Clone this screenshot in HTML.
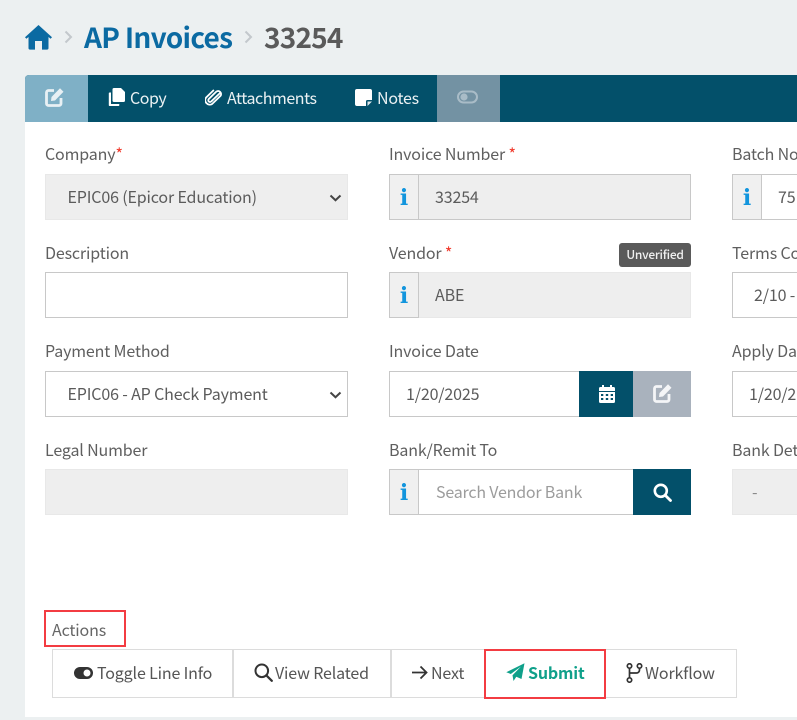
<!DOCTYPE html>
<html lang="en">
<head>
<meta charset="utf-8">
<title>AP Invoices 33254</title>
<style>
html,body{margin:0;padding:0}
body{width:797px;height:720px;overflow:hidden;position:relative;background:#ecf0f1;font-family:"Noto Sans CJK JP","Liberation Sans",sans-serif;color:#5b5b5b;font-size:16px;letter-spacing:-.15px}
.a{position:absolute;white-space:nowrap}
svg{display:block}
.card{position:absolute;left:25px;top:122px;width:772px;height:595px;background:#fff}
.bar{position:absolute;left:25px;top:75px;width:772px;height:47px;background:#03506a;border-radius:4px 0 0 0;overflow:hidden}
.tb{color:#fff;font-size:16px;letter-spacing:-.45px;line-height:47px;top:74px;opacity:.92}
.lb{font-size:16px;line-height:20px;color:#5f5f5f}
.req{color:#f0392b}
.box{position:absolute;box-sizing:border-box;height:46px;border:1px solid #c8c8c8;background:#fff;line-height:42px;font-size:16px;color:#5b5b5b;overflow:hidden;white-space:nowrap}
.dis{background:#eee;border-color:#e8e8e8}
.info{position:absolute;box-sizing:border-box;width:30px;height:46px;background:#f0f0f0;border:1px solid #c8c8c8;color:#1295dd;font:bold 22px/47px "DejaVu Serif","Liberation Serif",serif;letter-spacing:0;text-align:center}
.btn{position:absolute;box-sizing:border-box;top:649px;height:49px;border:1px solid #dcdcdc;background:#fff}
.bt{font-size:16px;line-height:20px;color:#555;top:662px}
</style>
</head>
<body>
<svg class="a" style="left:25px;top:25px" width="27" height="25" viewBox="0 0 27 25"><path d="M13.500 0 27 12.200 25.600 13.800 23.500 12V23a1.600 1.600 0 0 1-1.600 1.600H17V16H10v8.600H5.100A1.600 1.600 0 0 1 3.500 23V12L1.400 13.800 0 12.200Z" fill="#0b6aa2"/></svg>
<svg class="a" style="left:64px;top:30px" width="9" height="14" viewBox="0 0 9 14"><path d="M1.500 1.500 7 7 1.500 12.500" fill="none" stroke="#c3c8cc" stroke-width="2"/></svg>
<div class="a" style="left:84px;top:18px;font-size:28px;letter-spacing:-.72px;line-height:38px;font-weight:700;color:#0b6aa2">AP Invoices</div>
<svg class="a" style="left:244px;top:30px" width="9" height="14" viewBox="0 0 9 14"><path d="M1.500 1.500 7 7 1.500 12.500" fill="none" stroke="#c3c8cc" stroke-width="2"/></svg>
<div class="a" style="left:264px;top:18px;font-size:28px;letter-spacing:-.8px;line-height:38px;font-weight:700;color:#5a5a5a">33254</div>

<div class="card"></div>
<div class="bar">
  <div class="a" style="left:0;top:0;width:63px;height:47px;background:#7fb0c6"></div>
  <div class="a" style="left:412px;top:0;width:63px;height:47px;background:#7392a3"></div>
</div>
<svg class="a" style="left:44px;top:87px" width="21" height="21" viewBox="0 0 21 21"><path d="M10 3.500H4.500a2 2 0 0 0-2 2V16.500a2 2 0 0 0 2 2H15a2 2 0 0 0 2-2V11" fill="none" stroke="#e8f0f4" stroke-width="2.800"/><path d="M7.500 10 16 1.300 19.500 4.800 11 13.500 7 14Z" fill="#e8f0f4"/></svg>
<svg class="a" style="left:108px;top:88px" width="17" height="19" viewBox="0 0 17 19"><path d="M6 0H13L17 4V12.500a1.500 1.500 0 0 1-1.500 1.500H6a1.500 1.500 0 0 1-1.500-1.500V1.500A1.500 1.500 0 0 1 6 0Z" fill="#fff"/><path d="M3 4.500H1.500A.8.8 0 0 0 .8 5.300V17.200a.8.8 0 0 0 .7.800H10.500a.8.8 0 0 0 .8-.8V16H3Z" fill="#fff"/></svg>
<div class="a tb" style="left:130px">Copy</div>
<svg class="a" style="left:205px;top:88px" width="17" height="19" viewBox="0 0 17 19"><path d="M15 4.500 6.500 13.500a1.700 1.700 0 0 1-2.600-2.300L11 3.500a3 3 0 0 1 4.400 4L7.500 16A4.500 4.500 0 0 1 1.200 9.800L8 2.500" fill="none" stroke="#fff" stroke-width="1.800" stroke-linecap="round" transform="rotate(3 8 9)"/></svg>
<div class="a tb" style="left:227px">Attachments</div>
<svg class="a" style="left:355px;top:89px" width="17" height="17" viewBox="0 0 17 17"><path d="M2 0H15a2 2 0 0 1 2 2V11H12.500A1.500 1.500 0 0 0 11 12.500V17H2a2 2 0 0 1-2-2V2A2 2 0 0 1 2 0Z" fill="#fff"/><path d="M12.500 17V12.500H17Z" fill="#dfe8ec"/></svg>
<div class="a tb" style="left:377px;letter-spacing:-.25px">Notes</div>
<svg class="a" style="left:457px;top:90px" width="21" height="14" viewBox="0 0 21 14"><rect x="1" y="1.500" width="19" height="11" rx="5.500" fill="none" stroke="#a9bcc7" stroke-width="2"/><circle cx="7" cy="7" r="3.600" fill="#a9bcc7"/></svg>

<div class="a lb" style="left:45px;top:143px">Company<span class="req">*</span></div>
<div class="box dis" style="left:45px;top:174px;width:303px;padding-left:21.500px">EPIC06 (Epicor Education)</div>
<svg class="a" style="left:329px;top:194px" width="13" height="8" viewBox="0 0 13 8"><path d="M1.500 1.500 6.500 6.200 11.500 1.500" fill="none" stroke="#444" stroke-width="2"/></svg>

<div class="a lb" style="left:389px;top:143px">Invoice Number <span class="req">*</span></div>
<div class="box dis" style="left:389px;top:174px;width:302px;padding-left:45px;border-color:#c8c8c8">33254</div>
<div class="info" style="left:389px;top:174px">i</div>

<div class="a lb" style="left:732px;top:143px">Batch No</div>
<div class="box" style="left:732px;top:174px;width:90px;padding-left:45px">75</div>
<div class="info" style="left:732px;top:174px">i</div>

<div class="a lb" style="left:45px;top:242px">Description</div>
<div class="box" style="left:45px;top:272px;width:303px"></div>

<div class="a lb" style="left:389px;top:242px">Vendor <span class="req">*</span></div>
<div class="a" style="left:619px;top:243px;width:72px;height:24px;background:#5a5a5a;border-radius:3px;color:#f0f0f0;font-size:12px;letter-spacing:-.25px;font-weight:500;line-height:23px;text-align:center">Unverified</div>
<div class="box dis" style="left:389px;top:272px;width:302px;padding-left:45px">ABE</div>
<div class="info" style="left:389px;top:272px">i</div>

<div class="a lb" style="left:732px;top:242px">Terms Co</div>
<div class="box" style="left:732px;top:272px;width:90px;padding-left:21px">2/10 -</div>

<div class="a lb" style="left:45px;top:340px">Payment Method</div>
<div class="box" style="left:45px;top:371px;width:303px;padding-left:21.500px">EPIC06 - AP Check Payment</div>
<svg class="a" style="left:329px;top:391px" width="13" height="8" viewBox="0 0 13 8"><path d="M1.500 1.500 6.500 6.200 11.500 1.500" fill="none" stroke="#444" stroke-width="2"/></svg>

<div class="a lb" style="left:389px;top:340px">Invoice Date</div>
<div class="box" style="left:389px;top:371px;width:302px;padding-left:16px">1/20/2025</div>
<div class="a" style="left:579px;top:371px;width:54px;height:46px;background:#03506a"></div>
<div class="a" style="left:633px;top:371px;width:58px;height:46px;background:#a9b2bd"></div>
<svg class="a" style="left:599px;top:385px" width="16" height="18" viewBox="0 0 16 18"><path d="M3 0H5V2H11V0H13V2H14.500A1.500 1.500 0 0 1 16 3.500V6H0V3.500A1.500 1.500 0 0 1 1.500 2H3Z" fill="#fff"/><path d="M0 7H16V16.500A1.500 1.500 0 0 1 14.500 18H1.500A1.500 1.500 0 0 1 0 16.500ZM2 9V11H4.300V9ZM6.800 9V11H9.200V9ZM11.700 9V11H14V9ZM2 13V15H4.300V13ZM6.800 13V15H9.200V13ZM11.700 13V15H14V13Z" fill="#fff" fill-rule="evenodd"/></svg>
<svg class="a" style="left:652px;top:383px" width="21" height="21" viewBox="0 0 21 21"><path d="M10 3.500H4.500a2 2 0 0 0-2 2V16.500a2 2 0 0 0 2 2H15a2 2 0 0 0 2-2V11" fill="none" stroke="#f4f5f7" stroke-width="2.800"/><path d="M7.500 10 16 1.300 19.500 4.800 11 13.500 7 14Z" fill="#f4f5f7"/></svg>

<div class="a lb" style="left:732px;top:340px">Apply Da</div>
<div class="box" style="left:732px;top:371px;width:90px;padding-left:16px">1/20/2</div>

<div class="a lb" style="left:45px;top:439px">Legal Number</div>
<div class="box dis" style="left:45px;top:469px;width:303px"></div>

<div class="a lb" style="left:389px;top:439px">Bank/Remit To</div>
<div class="box" style="left:389px;top:469px;width:302px;padding-left:46px;color:#9c9c9c;letter-spacing:-.2px">Search Vendor Bank</div>
<div class="info" style="left:389px;top:469px">i</div>
<div class="a" style="left:633px;top:469px;width:58px;height:46px;background:#03506a"></div>
<svg class="a" style="left:653px;top:483px" width="19" height="19" viewBox="0 0 19 19"><circle cx="7.800" cy="7.800" r="6" fill="none" stroke="#fff" stroke-width="2.600"/><path d="M12.200 12.200 17.500 17.500" stroke="#fff" stroke-width="2.800" stroke-linecap="round"/></svg>

<div class="a lb" style="left:732px;top:439px">Bank Det</div>
<div class="box dis" style="left:732px;top:469px;width:90px;padding-left:19px;color:#8a8a8a">-</div>

<div class="a" style="left:44px;top:610px;box-sizing:border-box;width:82px;height:37px;border:2px solid #f33c42"></div>
<div class="a lb" style="left:52px;top:619px;color:#666">Actions</div>

<div class="btn" style="left:52px;width:181px"></div>
<svg class="a" style="left:73px;top:666px" width="21" height="14" viewBox="0 0 21 14"><path d="M7 1H14a6 6 0 0 1 0 12H7A6 6 0 0 1 7 1ZM14 3.500a3.500 3.500 0 1 0 0 7 3.500 3.500 0 0 0 0-7Z" fill="#333" fill-rule="evenodd"/></svg>
<div class="a bt" style="left:97px">Toggle Line Info</div>

<div class="btn" style="left:233px;width:158px"></div>
<svg class="a" style="left:254px;top:663px" width="19" height="19" viewBox="0 0 19 19"><circle cx="7.800" cy="7.800" r="6.300" fill="none" stroke="#333" stroke-width="2"/><path d="M12.300 12.300 17.800 17.800" stroke="#333" stroke-width="2.200" stroke-linecap="round"/></svg>
<div class="a bt" style="left:275px">View Related</div>

<div class="btn" style="left:391px;width:94px"></div>
<svg class="a" style="left:411px;top:665px" width="17" height="15" viewBox="0 0 17 15"><path d="M1 7.500H15M9.500 1.500 15.500 7.500 9.500 13.500" fill="none" stroke="#333" stroke-width="1.800"/></svg>
<div class="a bt" style="left:431px">Next</div>

<div class="btn" style="left:605px;width:132px"></div>
<svg class="a" style="left:626px;top:663px" width="17" height="20" viewBox="0 0 17 20"><circle cx="3.500" cy="3" r="2.200" fill="none" stroke="#333" stroke-width="1.700"/><circle cx="3.500" cy="17" r="2.200" fill="none" stroke="#333" stroke-width="1.700"/><circle cx="13.500" cy="3" r="2.200" fill="none" stroke="#333" stroke-width="1.700"/><path d="M3.500 5.200V14.800M13.500 5.200V7a3 3 0 0 1-3 3H3.500" fill="none" stroke="#333" stroke-width="1.700"/></svg>
<div class="a bt" style="left:645px">Workflow</div>

<div class="a" style="left:484px;top:649px;box-sizing:border-box;width:122px;height:50px;border:2px solid #f33c42;background:#fff"></div>
<svg class="a" style="left:506px;top:663px" width="19" height="19" viewBox="0 0 19 19"><path d="M18.500 .3 15.500 16 10.300 13.800 7.500 18 6.500 12.300 15 3.500 4.800 11 .3 9.200Z" fill="#0fa08a"/></svg>
<div class="a bt" style="left:528px;font-weight:700;color:#0fa08a">Submit</div>
</body>
</html>
